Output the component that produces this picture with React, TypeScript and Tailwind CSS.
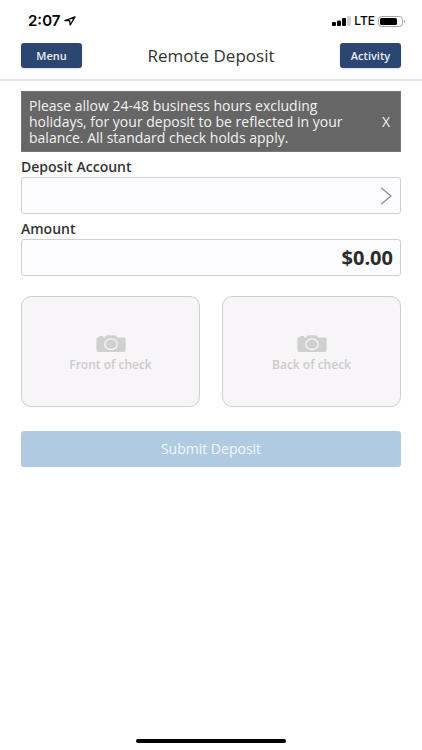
import React, { useState } from "react";

const CameraIcon: React.FC = () => (
  <svg
    width="30"
    height="18"
    viewBox="0 0 30 18"
    fill="none"
    aria-hidden="true"
  >
    <path
      d="M2 2.4h.8c.2-.9.7-1.3 1.6-1.3h1.4c.9 0 1.4.4 1.6 1.3h1.4l1-1.4c.4-.6 1-.8 1.800-.8h6.800c.8 0 1.400.2 1.800.8l1 1.400H28c1 0 1.600.5 1.600 1.400v11.800c0 .9-.6 1.400-1.600 1.400H2c-1 0-1.600-.5-1.600-1.400V3.800C.4 2.900 1 2.400 2 2.400z"
      fill="#d0d0d1"
    />
    <ellipse cx="15" cy="9.200" rx="6.200" ry="5.300" stroke="#f7f5f7" strokeWidth="1.300" />
  </svg>
);

const StatusBar: React.FC = () => (
  <div className="flex h-10 items-center justify-between pl-7 pr-4 pt-0.5 text-black">
    <div className="flex items-center gap-1">
      <span className="font-['Inter','Liberation_Sans',sans-serif] text-[15px] font-semibold">
        2:07
      </span>
      <svg width="12" height="10" viewBox="0 0 12 10" aria-hidden="true">
        <path
          d="M11 .8L1 4.700h4.600l.6 4.300z"
          fill="none"
          stroke="#000"
          strokeWidth="1.300"
          strokeLinejoin="round"
        />
      </svg>
    </div>
    <div className="flex items-center gap-[3px]">
      <svg width="19" height="10" viewBox="0 0 19 10" aria-hidden="true">
        <rect x="0" y="6" width="4" height="4" rx="1" />
        <rect x="5" y="4.500" width="4" height="5.500" rx="1" />
        <rect x="10" y="2" width="4" height="8" rx="1" />
        <rect x="15" y="0" width="4" height="10" rx="1" fill="#d2d2d2" />
      </svg>
      <span className="font-['Inter','Liberation_Sans',sans-serif] text-xs font-medium">
        LTE
      </span>
      <svg width="28" height="11" viewBox="0 0 28 11" aria-hidden="true">
        <rect
          x=".5"
          y=".5"
          width="24"
          height="10"
          rx="3"
          fill="none"
          stroke="#a3a3a3"
        />
        <rect x="2" y="2" width="17" height="7" rx="1.500" />
        <path d="M26 3.800c1.200.4 1.200 3 0 3.400z" fill="#8a8a8a" />
      </svg>
    </div>
  </div>
);

const App: React.FC = () => {
  const [showNotice, setShowNotice] = useState(true);
  const [account, setAccount] = useState("");
  const [amount, setAmount] = useState("$0.00");

  return (
    <div className="flex min-h-screen flex-col bg-white font-['Open_Sans','Noto_Sans',sans-serif] text-[#333]">
      <StatusBar />

      <header className="flex h-[41px] items-start justify-between border-b-2 border-[#e6e6e6] px-[21px] pt-[3px]">
        <button
          type="button"
          className="h-[25px] w-[61px] rounded-[3px] bg-[#2b4670] pt-px text-[11px] font-semibold text-[#e8edf5] shadow"
        >
          Menu
        </button>
        <h1 className="text-[17px] leading-[25px]">Remote Deposit</h1>
        <button
          type="button"
          className="h-[25px] w-[61px] rounded-[3px] bg-[#2b4670] pt-px text-[11px] font-semibold text-[#e8edf5] shadow"
        >
          Activity
        </button>
      </header>

      <main className="px-[21px] pt-[10px]">
        {showNotice && (
          <div className="flex items-center justify-between border border-[#757575] bg-[#666] pb-[5px] pl-[7px] pr-2 pt-[6px] text-[#f2f2f2]">
            <p className="max-w-[325px] text-sm leading-4">
              Please allow 24-48 business hours excluding holidays, for your
              deposit to be reflected in your balance. All standard check holds
              apply.
            </p>
            <button
              type="button"
              aria-label="Dismiss notice"
              className="w-3 text-sm leading-4"
              onClick={() => setShowNotice(false)}
            >
              X
            </button>
          </div>
        )}

        {/* Account and amount */}
        <label
          htmlFor="account"
          className="mt-[5px] block text-sm font-semibold leading-5"
        >
          Deposit Account
        </label>
        <div className="relative">
          <select
            id="account"
            value={account}
            onChange={(e) => setAccount(e.target.value)}
            className="block h-[37px] w-full appearance-none rounded-[3px] border border-[#cfcfd1] bg-[#fcfcfe] px-2 text-sm"
          >
            <option value=""></option>
          </select>
          <svg
            width="12"
            height="18"
            viewBox="0 0 12 18"
            className="pointer-events-none absolute right-[9px] top-[10px]"
            aria-hidden="true"
          >
            <path
              d="M1 .8L11 9L1 17.200"
              fill="none"
              stroke="#8c8c8c"
              strokeWidth="1.200"
            />
          </svg>
        </div>

        <label
          htmlFor="amount"
          className="mt-[5px] block text-sm font-semibold leading-5"
        >
          Amount
        </label>
        <input
          id="amount"
          type="text"
          inputMode="decimal"
          value={amount}
          onChange={(e) => setAmount(e.target.value)}
          className="block h-[37px] w-full rounded-[3px] border border-[#cfcfd1] bg-[#fcfcfe] px-[7px] text-right text-xl font-bold text-[#2b2b2b]"
        />

        {/* Check photos */}
        <div className="mt-5 grid grid-cols-2 gap-[22px]">
          {["Front of check", "Back of check"].map((side) => (
            <button
              key={side}
              type="button"
              className="flex h-[111px] flex-col items-center justify-center rounded-[10px] border border-[#d0cfd0] bg-[#f7f5f7] pt-1"
            >
              <CameraIcon />
              <span className="mt-1 text-xs font-semibold leading-4 text-[#cbcacb]">
                {side}
              </span>
            </button>
          ))}
        </div>

        <button
          type="submit"
          disabled
          className="mt-6 h-9 w-full rounded-[3px] bg-[#b0cae2] text-sm text-[#f3f8fc]"
        >
          Submit Deposit
        </button>
      </main>

      <div className="mx-auto mb-[7px] mt-auto h-1 w-[150px] rounded-full bg-black" />
    </div>
  );
};

export default App;
